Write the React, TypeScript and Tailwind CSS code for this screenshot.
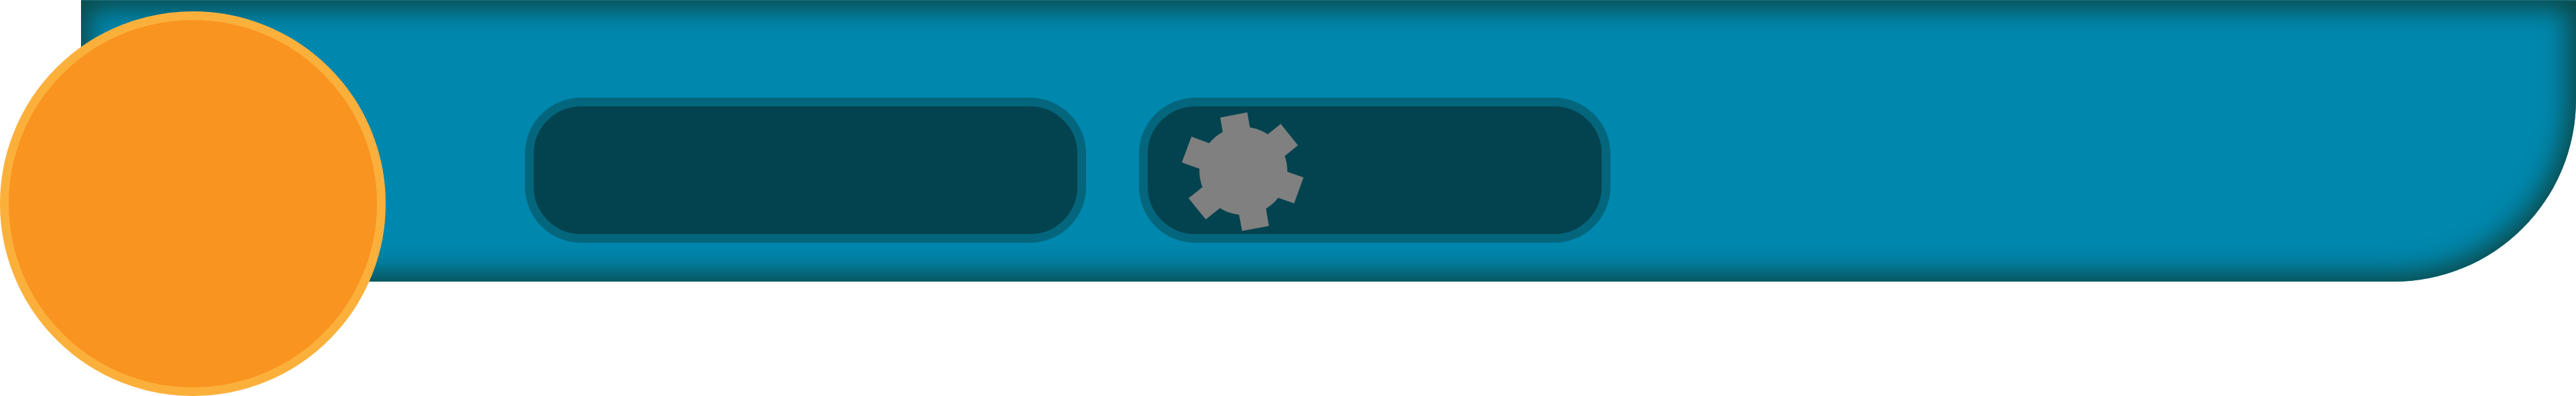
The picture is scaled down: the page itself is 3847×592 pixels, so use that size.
import type { ReactNode } from "react";

function Slot({ className, children }: { className: string; children?: ReactNode }) {
  return (
    <div
      className={`flex h-[217px] shrink-0 items-start rounded-[84px] border-[13px] border-[#04667d] bg-[#03434f] ${className}`}
    >
      {children}
    </div>
  );
}

function Gear() {
  return (
    <svg
      viewBox="75 84 546 534"
      className="h-[178px] w-[182px] shrink-0 fill-[#808080]"
      aria-hidden="true"
    >
      <circle cx="350.5" cy="346.5" r="197" />
      <path d="M247 107 L368 84 L380 153 L350 346 L258 172 Z" />
      <path d="M518 136 L595 232 L537 279 L350 346 L460 182 Z" />
      <path d="M620 376 L578 492 L507 467 L350 346 L547 350 Z" />
      <path d="M465 593 L345 616 L331 542 L350 346 L452 516 Z" />
      <path d="M182 564 L105 469 L167 419 L350 346 L246 513 Z" />
      <path d="M75 308 L118 193 L197 222 L350 346 L154 337 Z" />
    </svg>
  );
}

export default function App() {
  return (
    <div className="min-h-screen overflow-hidden bg-white">
      <header className="flex items-start">
        <div className="z-10 mt-[17px] h-[575px] w-[576px] shrink-0 rounded-full border-[13px] border-[#fcb03c] bg-[#f99420]" />
        <div className="-ml-[455px] flex min-w-0 flex-1 items-start gap-[79px] rounded-br-[272px] border-t border-[#1a6f7c] bg-[#0087ad] pt-[145px] pb-[58px] pl-[663px] shadow-[inset_0_0_38px_12px_#0c4745]">
          <Slot className="w-[838px]" />
          <Slot className="w-[704px] pt-[9px] pl-[51px]">
            <Gear />
          </Slot>
        </div>
      </header>
    </div>
  );
}
